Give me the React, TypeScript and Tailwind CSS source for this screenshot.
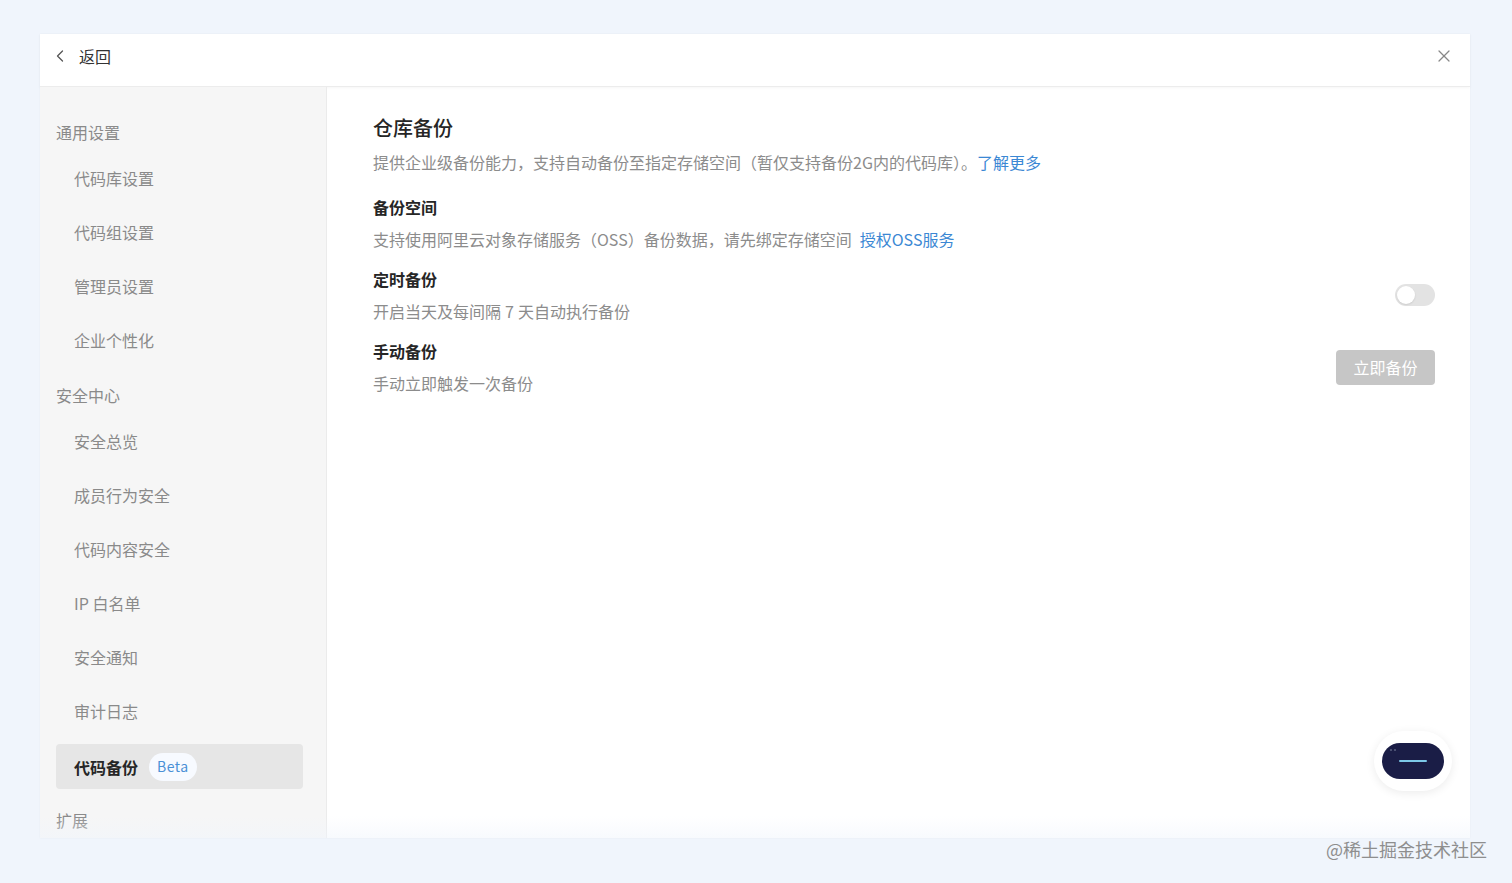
import { ChevronLeft, X } from "lucide-react"

const font = { fontFamily: '"Noto Sans CJK SC", "Noto Sans", sans-serif' }

type NavItem = { label: string; active?: boolean; beta?: boolean }
type NavGroup = { title: string; items: NavItem[] }

const groups: NavGroup[] = [
    {
        title: "通用设置",
        items: [
            { label: "代码库设置" },
            { label: "代码组设置" },
            { label: "管理员设置" },
            { label: "企业个性化" },
        ],
    },
    {
        title: "安全中心",
        items: [
            { label: "安全总览" },
            { label: "成员行为安全" },
            { label: "代码内容安全" },
            { label: "IP 白名单" },
            { label: "安全通知" },
            { label: "审计日志" },
            { label: "代码备份", active: true, beta: true },
        ],
    },
    { title: "扩展", items: [] },
]

function Sidebar() {
    return (
        <div className="w-[287px] shrink-0 flex flex-col bg-[#f6f6f6] border-r border-[#ebebeb] pl-4 pr-[23px] pt-[33px] overflow-hidden">
            {groups.map((g, i) => (
                <div key={g.title} className={i === 0 ? "flex flex-col" : "flex flex-col mt-[12px]"}>
                    <div className="h-6 leading-6 text-[16px] text-[#8a8a8a] mb-[11px]">{g.title}</div>
                    {g.items.map((item) => (
                        <div
                            key={item.label}
                            className={
                                item.active
                                    ? "h-[45px] mt-[2px] mb-[7px] pl-[18px] flex items-center rounded-[4px] bg-[#e6e6e6]"
                                    : "h-[45px] mb-[9px] pl-[18px] flex items-center rounded-[4px]"
                            }
                        >
                            <span
                                className={
                                    item.active
                                        ? "text-[16px] font-bold text-[#262626]"
                                        : "text-[16px] text-[#8a8a8a]"
                                }
                            >
                                {item.label}
                            </span>
                            {item.beta && (
                                <span className="ml-[11px] h-[28px] px-[8px] flex items-center rounded-full bg-[#f7faff] text-[14px] text-[#4a90d6] tracking-[0.5px]">
                                    Beta
                                </span>
                            )}
                        </div>
                    ))}
                </div>
            ))}
        </div>
    )
}

function Section({ title, desc, children }: { title: string; desc: React.ReactNode; children?: React.ReactNode }) {
    return (
        <div className="flex items-center justify-between mt-4">
            <div>
                <div className="h-6 leading-6 text-[16px] font-bold text-[#262626]">{title}</div>
                <div className="h-6 leading-6 mt-2 text-[16px] text-[#8c8c8c]">{desc}</div>
            </div>
            {children}
        </div>
    )
}

export default function App() {
    return (
        <div className="min-h-screen w-full bg-[#f0f5fc] relative overflow-hidden" style={font}>
            <div className="pt-[34px] pl-10 pr-[42px]">
                <div className="relative bg-white h-[804px] flex flex-col shadow-[0_0_2px_rgba(0,0,0,0.04)]">
                    <div className="h-[53px] shrink-0 flex items-center justify-between pl-[10px] pr-[16px] pb-[9px] border-b border-[#ececec] shadow-[0_1px_3px_rgba(0,0,0,0.04)]">
                        <div className="flex items-center">
                            <ChevronLeft className="w-[20px] h-[20px] text-[#555]" strokeWidth={1.5} />
                            <span className="ml-[9px] text-[16px] text-[#333]">返回</span>
                        </div>
                        <X className="w-[20px] h-[20px] text-[#888]" strokeWidth={1.5} />
                    </div>
                    <div className="flex flex-1 min-h-0">
                        <Sidebar />
                        <div className="flex-1 flex flex-col pl-[46px] pr-[35px] pt-[27px]">
                            <div className="h-7 leading-7 text-[20px] font-medium text-[#262626]">仓库备份</div>
                            <div className="h-6 leading-6 mt-[8px] text-[16px] text-[#8c8c8c]">
                                提供企业级备份能力，支持自动备份至指定存储空间（暂仅支持备份2G内的代码库）。
                                <span className="text-[#3b88d4]">了解更多</span>
                            </div>
                            <div className="flex flex-col mt-[5px]">
                                <Section
                                    title="备份空间"
                                    desc={
                                        <>
                                            支持使用阿里云对象存储服务（OSS）备份数据，请先绑定存储空间
                                            <span className="ml-2 text-[#3b88d4]">授权OSS服务</span>
                                        </>
                                    }
                                />
                                <Section
                                    title="定时备份"
                                    desc={
                                        <>
                                            开启当天及每间隔<span className="mx-[4px]">7</span>天自动执行备份
                                        </>
                                    }
                                >
                                    <div className="w-[40px] h-[22px] rounded-full bg-[#e3e3e3] p-[2px] flex items-center">
                                        <div className="w-[18px] h-[18px] rounded-full bg-white shadow-[0_1px_2px_rgba(0,0,0,0.1)]" />
                                    </div>
                                </Section>
                                <Section title="手动备份" desc="手动立即触发一次备份">
                                    <button className="w-[99px] h-[35px] rounded-[4px] bg-[#c6c6c6] text-white text-[16px]">
                                        立即备份
                                    </button>
                                </Section>
                            </div>
                        </div>
                    </div>
                    <div className="absolute left-0 right-0 bottom-0 h-[22px] bg-gradient-to-b from-transparent to-[#f0f5fc]/50 pointer-events-none" />
                    <div className="absolute right-[18px] bottom-[47px] w-[78px] h-[60px] rounded-full bg-white shadow-[0_2px_10px_rgba(0,0,0,0.08)] flex items-center justify-center">
                        <div className="relative w-[62px] h-[36px] rounded-[18px] bg-[#1a1d46] flex items-center justify-center">
                            <div className="w-[28px] h-[2px] bg-[#7cc8e8] rounded" />
                            <div className="absolute left-[8px] top-[6px] flex gap-[2px]">
                                <div className="w-[2px] h-[2px] bg-[#5a6080] rounded-full" />
                                <div className="w-[2px] h-[2px] bg-[#5a6080] rounded-full" />
                            </div>
                        </div>
                    </div>
                </div>
            </div>
            <div className="absolute right-[25px] top-[836px] text-[18px] text-[#8e8e8e]">@稀土掘金技术社区</div>
        </div>
    )
}
